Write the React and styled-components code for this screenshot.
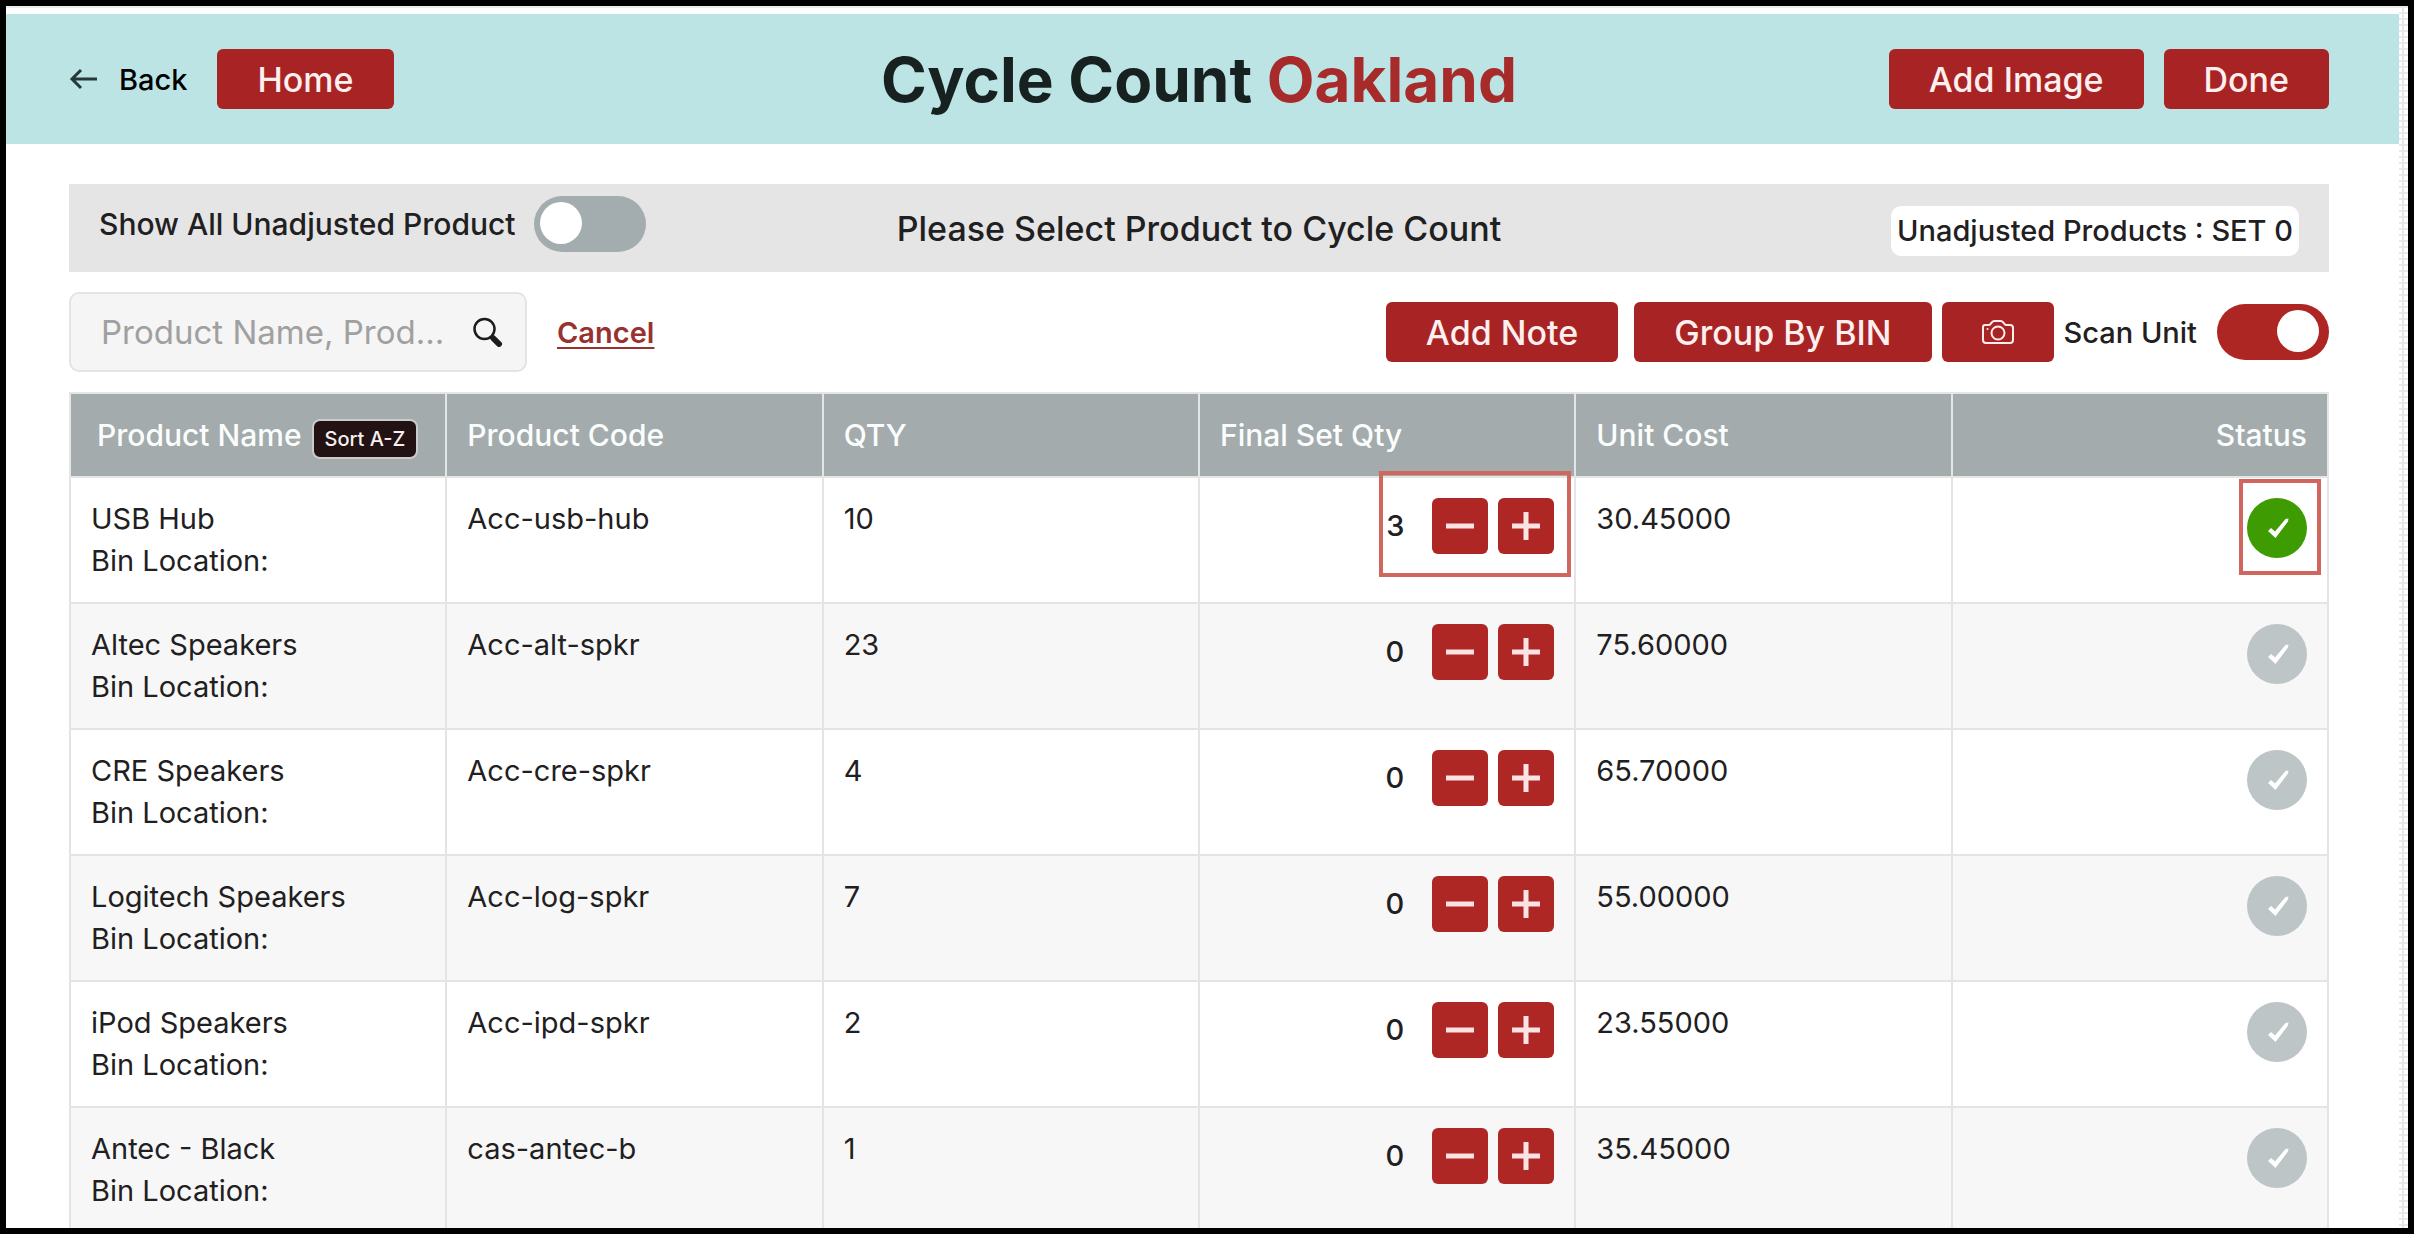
import React, { useState } from "react";
import styled, { createGlobalStyle } from "styled-components";

const startProducts = [
  { name: "USB Hub", code: "Acc-usb-hub", qty: 10, setQty: 3, cost: "30.45000", done: true },
  { name: "Altec Speakers", code: "Acc-alt-spkr", qty: 23, setQty: 0, cost: "75.60000" },
  { name: "CRE Speakers", code: "Acc-cre-spkr", qty: 4, setQty: 0, cost: "65.70000" },
  { name: "Logitech Speakers", code: "Acc-log-spkr", qty: 7, setQty: 0, cost: "55.00000" },
  { name: "iPod Speakers", code: "Acc-ipd-spkr", qty: 2, setQty: 0, cost: "23.55000" },
  { name: "Antec - Black", code: "cas-antec-b", qty: 1, setQty: 0, cost: "35.45000" },
];

const ArrowIcon = () => (
  <svg width="28" height="24" viewBox="0 0 28 24" fill="none" stroke="#26393a" strokeWidth="3">
    <path d="M28 12H3M12 3L3 12L12 21" />
  </svg>
);

const SearchIcon = () => (
  <svg width="30" height="30" viewBox="0 0 30 30" fill="none" stroke="#1c1c1c">
    <circle cx="11.500" cy="12" r="10" strokeWidth="2.500" />
    <path d="M18 19L21 22" strokeWidth="4" />
    <path d="M20.500 21.500L26 27" strokeWidth="6" strokeLinecap="round" />
  </svg>
);

const CameraIcon = () => (
  <svg width="34" height="26" viewBox="0 0 34 26" fill="none" stroke="#ffeded" strokeWidth="2">
    <path d="M4 6H8C10 6 10.500 2 13 2H20C22.500 2 23 6 25 6H29Q32 6 32 9V21Q32 24 29 24H5Q2 24 2 21V8Q2 6 4 6Z" />
    <circle cx="17" cy="14" r="6.500" />
    <circle cx="6.500" cy="10" r="1" fill="#ffeded" stroke="none" />
  </svg>
);

const CheckIcon = () => (
  <svg width="60" height="60" viewBox="0 0 60 60" fill="#ffffff">
    <path d="M21 33L24 30L28 33.500L38.500 21L41.500 20.500L41 23.500L28.500 40Z" />
  </svg>
);

const MinusIcon = () => (
  <svg width="28" height="28" viewBox="0 0 28 28" stroke="#fce3e3" strokeWidth="5">
    <path d="M0 14H28" />
  </svg>
);

const PlusIcon = () => (
  <svg width="28" height="28" viewBox="0 0 28 28" stroke="#fce3e3" strokeWidth="5">
    <path d="M0 14H28M14 0V28" />
  </svg>
);

const App = () => {
  const [products, setProducts] = useState(startProducts);
  const [showAll, setShowAll] = useState(false);
  const [scanUnit, setScanUnit] = useState(true);

  const changeQty = (code, step) => {
    setProducts(
      products.map((p) =>
        p.code === code ? { ...p, setQty: Math.max(0, p.setQty + step) } : p
      )
    );
  };

  return (
    <Frame>
      <GlobalStyle />
      <Screen>
        <Header>
          <Group $gap={30}>
            <BackLink href="#back">
              <ArrowIcon />
              Back
            </BackLink>
            <Button>Home</Button>
          </Group>
          <Title>
            Cycle Count <span>Oakland</span>
          </Title>
          <Group $gap={20} $end>
            <Button>Add Image</Button>
            <Button>Done</Button>
          </Group>
        </Header>
        <Content>
          <InfoBar>
            <ShowAll>
              Show All Unadjusted Product
              <Switch
                type="checkbox"
                checked={showAll}
                onChange={() => setShowAll(!showAll)}
              />
            </ShowAll>
            <Prompt>Please Select Product to Cycle Count</Prompt>
            <Counter>Unadjusted Products : SET 0</Counter>
          </InfoBar>
          <Toolbar>
            <Group $gap={30}>
              <SearchBox>
                <SearchInput
                  type="text"
                  aria-label="Search products"
                  placeholder="Product Name, Prod..."
                />
                <SearchButton aria-label="Search">
                  <SearchIcon />
                </SearchButton>
              </SearchBox>
              <CancelLink href="#cancel">Cancel</CancelLink>
            </Group>
            <Group $gap={10}>
              <Group $gap={16}>
                <Button>Add Note</Button>
                <Button>Group By BIN</Button>
              </Group>
              <CameraButton aria-label="Camera">
                <CameraIcon />
              </CameraButton>
              <ScanUnit>
                Scan Unit
                <Switch
                  type="checkbox"
                  checked={scanUnit}
                  onChange={() => setScanUnit(!scanUnit)}
                />
              </ScanUnit>
            </Group>
          </Toolbar>
          <Table>
            <thead>
              <tr>
                <HeadCell>
                  <NameHead>
                    Product Name
                    <SortButton>Sort A-Z</SortButton>
                  </NameHead>
                </HeadCell>
                <HeadCell>Product Code</HeadCell>
                <HeadCell>QTY</HeadCell>
                <HeadCell>Final Set Qty</HeadCell>
                <HeadCell>Unit Cost</HeadCell>
                <HeadCell $end>Status</HeadCell>
              </tr>
            </thead>
            <tbody>
              {products.map((p) => (
                <Row key={p.code}>
                  <Cell>
                    {p.name}
                    <br />
                    Bin Location:
                  </Cell>
                  <Cell>{p.code}</Cell>
                  <Cell>{p.qty}</Cell>
                  <Cell>
                    <Stepper>
                      <Amount>{p.setQty}</Amount>
                      <StepButton aria-label="Decrease" onClick={() => changeQty(p.code, -1)}>
                        <MinusIcon />
                      </StepButton>
                      <StepButton aria-label="Increase" onClick={() => changeQty(p.code, 1)}>
                        <PlusIcon />
                      </StepButton>
                      {p.done && <QtyMark />}
                    </Stepper>
                  </Cell>
                  <Cell>{p.cost}</Cell>
                  <Cell>
                    <Status $done={p.done}>
                      <CheckIcon />
                      {p.done && <StatusMark />}
                    </Status>
                  </Cell>
                </Row>
              ))}
            </tbody>
          </Table>
        </Content>
      </Screen>
      <Gutter />
    </Frame>
  );
};

export default App;

const GlobalStyle = createGlobalStyle`
  * {
    box-sizing: border-box;
  }
  body {
    margin: 0;
    background: #000000;
    color: #1f2021;
    font-family: Inter, "Open Sans", sans-serif;
    font-size: 29px;
  }
  button,
  input {
    font-family: inherit;
  }
`;

const Frame = styled.div`
  display: flex;
  height: 100vh;
  overflow: hidden;
  border: 6px solid #000000;
  background: #ffffff;
`;

const Screen = styled.div`
  flex: 1;
  padding-top: 6px;
  border-top: 2px solid #ededed;
`;

const Gutter = styled.div`
  width: 9px;
  background:
    linear-gradient(90deg, transparent 3px, #e6e6e6 3px, #e6e6e6 5px, transparent 5px),
    repeating-linear-gradient(#e9e9e9 0, #e9e9e9 2px, #ffffff 2px, #ffffff 6px);
`;

const Header = styled.header`
  display: grid;
  grid-template-columns: 1fr auto 1fr;
  align-items: center;
  height: 130px;
  padding: 0 70px 0 63px;
  background: #bce4e5;
`;

const Group = styled.div`
  display: flex;
  align-items: center;
  justify-content: ${(props) => (props.$end ? "flex-end" : "flex-start")};
  gap: ${(props) => props.$gap}px;
`;

const BackLink = styled.a`
  display: flex;
  align-items: center;
  gap: 22px;
  color: #000000;
  font-weight: 500;
  text-decoration: none;
`;

const Title = styled.h1`
  margin: 0;
  color: #172120;
  font-size: 62px;
  font-weight: 700;
  span {
    color: #a62b2a;
  }
`;

const Button = styled.button`
  height: 60px;
  padding: 0 40px;
  border: none;
  border-radius: 6px;
  background: #a82424;
  color: #ffefef;
  font-size: 34px;
  font-weight: 500;
  white-space: nowrap;
  cursor: pointer;
`;

const CameraButton = styled(Button)`
  width: 112px;
  padding: 0;
`;

const Content = styled.main`
  padding: 40px 70px 0 63px;
`;

const InfoBar = styled.div`
  display: grid;
  grid-template-columns: 1fr auto 1fr;
  height: 88px;
  padding: 12px 30px 16px;
  background: #e5e5e5;
  font-weight: 500;
`;

const ShowAll = styled.label`
  display: flex;
  align-items: center;
  align-self: start;
  gap: 18px;
  font-size: 30px;
`;

const Prompt = styled.div`
  align-self: end;
  font-size: 34px;
  line-height: 54px;
`;

const Counter = styled.div`
  align-self: end;
  justify-self: end;
  padding: 0 6px;
  border-radius: 10px;
  background: #ffffff;
  line-height: 50px;
`;

const Switch = styled.input`
  appearance: none;
  width: 112px;
  height: 56px;
  margin: 0;
  padding: 6px 10px 6px 6px;
  display: flex;
  border-radius: 28px;
  background: #a3acaf;
  cursor: pointer;
  &::before {
    content: "";
    width: 42px;
    height: 42px;
    border-radius: 50%;
    background: #ffffff;
  }
  &:checked {
    justify-content: flex-end;
    background: #ae2623;
  }
`;

const Toolbar = styled.div`
  display: flex;
  align-items: center;
  justify-content: space-between;
  margin: 20px 0;
`;

const SearchBox = styled.div`
  display: flex;
  align-items: center;
  width: 458px;
  height: 80px;
  padding: 0 22px 0 30px;
  border: 2px solid #e4e4e4;
  border-radius: 10px;
  background: #f5f5f5;
`;

const SearchInput = styled.input`
  flex: 1;
  min-width: 0;
  padding: 0;
  border: none;
  outline: none;
  background: none;
  color: #1f2021;
  font-size: 33px;
  &::placeholder {
    color: #a0a0a0;
  }
`;

const SearchButton = styled.button`
  display: flex;
  padding: 0;
  border: none;
  background: none;
  cursor: pointer;
`;

const CancelLink = styled.a`
  color: #973230;
  font-weight: 600;
  text-decoration-thickness: 2px;
  text-underline-offset: 4px;
`;

const ScanUnit = styled.label`
  display: flex;
  align-items: center;
  gap: 20px;
  font-weight: 500;
`;

const Table = styled.table`
  width: 100%;
  table-layout: fixed;
  border-collapse: collapse;
`;

const HeadCell = styled.th`
  height: 84px;
  padding: 0 20px;
  border: 2px solid #e4e6e6;
  background: #a3abad;
  color: #fbfdfd;
  font-size: 30px;
  font-weight: 500;
  text-align: ${(props) => (props.$end ? "right" : "left")};
`;

const NameHead = styled.div`
  display: flex;
  align-items: baseline;
  gap: 10px;
  padding: 6px 0 0 6px;
  white-space: nowrap;
`;

const SortButton = styled.button`
  height: 40px;
  padding: 0 11px;
  border: 2px solid #cbcbcb;
  border-radius: 8px;
  background: #221213;
  color: #f4f0f0;
  font-size: 20px;
  font-weight: 500;
  cursor: pointer;
`;

const Row = styled.tr`
  &:nth-child(even) {
    background: #f7f7f7;
  }
`;

const Cell = styled.td`
  padding: 20px;
  border: 2px solid #e4e4e4;
  line-height: 42px;
  vertical-align: top;
`;

const Stepper = styled.div`
  position: relative;
  display: flex;
  align-items: center;
  justify-content: flex-end;
  gap: 10px;
`;

const Amount = styled.span`
  margin-right: 18px;
  font-weight: 500;
`;

const StepButton = styled.button`
  display: flex;
  align-items: center;
  justify-content: center;
  width: 56px;
  height: 56px;
  padding: 0;
  border: none;
  border-radius: 6px;
  background: #ae2725;
  cursor: pointer;
`;

const Status = styled.div`
  position: relative;
  width: 60px;
  height: 60px;
  margin-left: auto;
  border-radius: 50%;
  background: ${(props) => (props.$done ? "#3f9b02" : "#bdc5c7")};
`;

const Mark = styled.span`
  position: absolute;
  border: 4px solid #d0665e;
  pointer-events: none;
`;

const QtyMark = styled(Mark)`
  top: -27px;
  right: -17px;
  width: 192px;
  height: 106px;
`;

const StatusMark = styled(Mark)`
  top: -19px;
  left: -8px;
  width: 82px;
  height: 96px;
`;
